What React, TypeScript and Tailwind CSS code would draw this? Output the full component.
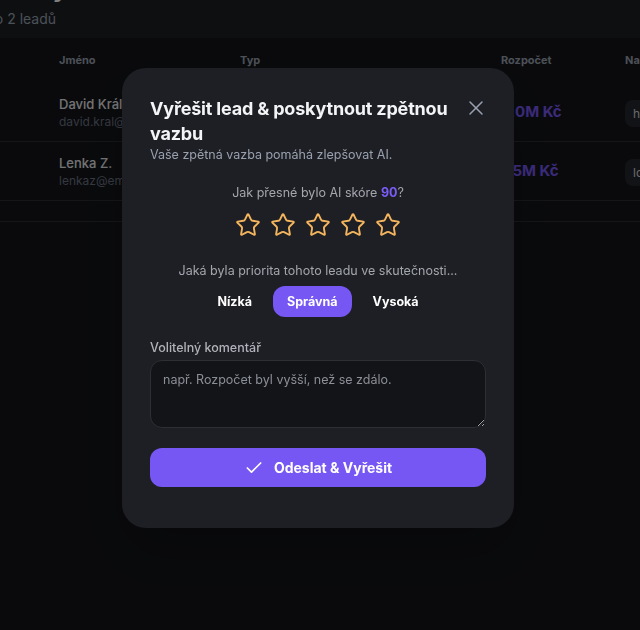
import { Check, Star, X } from "lucide-react";

interface Lead {
  id: number;
  name: string;
  email: string;
  type: string;
  budget: string;
  badge: string;
}

const leads: Lead[] = [
  { id: 1, name: "David Král", email: "david.kral@email.cz", type: "Koupě bytu", budget: "2,0M Kč", badge: "high" },
  { id: 2, name: "Lenka Z.", email: "lenkaz@email.cz", type: "Pronájem", budget: "1,5M Kč", badge: "low" },
];

function LeadsPage() {
  return (
    <div className="min-h-[630px] bg-[#1c1e23] overflow-hidden">
      <div className="-mt-[27px] -ml-[68px] mb-[9px]">
        <h1 className="text-2xl font-bold text-white leading-8">Moje Leady</h1>
        <p className="mt-1 text-[14px] leading-5 text-gray-400">Zobrazeno 2 leadů</p>
      </div>
      <div className="bg-[#141519] min-h-[600px]">
        <div className="grid grid-cols-[59px_181px_261px_124px_1fr] h-[45px] items-center text-[11px] font-bold text-gray-400">
          <div />
          <div>Jméno</div>
          <div>Typ</div>
          <div>Rozpočet</div>
          <div>Nabídka</div>
        </div>
        {leads.map(lead => (
          <div
            key={lead.id}
            className="grid grid-cols-[59px_181px_261px_124px_1fr] h-[59px] items-center border-b border-[#2a2c31]"
          >
            <div />
            <div>
              <div className="text-[13px] font-medium text-gray-200 leading-5">{lead.name}</div>
              <div className="text-[12px] text-gray-500 leading-4">{lead.email}</div>
            </div>
            <div className="text-[13px] text-gray-300">{lead.type}</div>
            <div className="text-[15px] font-bold text-[#7657f3]">{lead.budget}</div>
            <div>
              <span className="px-2 py-1.5 rounded-lg bg-[#25272c] text-[12px] text-gray-300">{lead.badge}</span>
            </div>
          </div>
        ))}
        <div className="h-[21px] border-b border-[#2a2c31]" />
      </div>
    </div>
  );
}

function FeedbackModal() {
  const priorities = ["Nízká", "Správná", "Vysoká"];
  const selected = "Správná";

  return (
    <div className="fixed inset-0 bg-black/50 flex justify-center pt-[68px] pr-1">
      <div className="w-[392px] h-[460px] bg-[#1e1f24] rounded-3xl px-7 pt-7 pb-[41px] shadow-2xl">
        <div className="flex items-start justify-between gap-2">
          <div>
            <h2 className="text-[18px] font-bold leading-[25px] tracking-[-0.01em] text-[#f3f4f6]">
              Vyřešit lead &amp; poskytnout zpětnou vazbu
            </h2>
            <p className="text-[12.5px] leading-[18px] text-gray-400">Vaše zpětná vazba pomáhá zlepšovat AI.</p>
          </div>
          <button className="text-gray-400 -mr-[2px] shrink-0">
            <X size={24} strokeWidth={1.5} />
          </button>
        </div>

        <p className="mt-5 text-center text-[12.5px] leading-[18px] text-[#a3a6ad]">
          Jak přesné bylo AI skóre <span className="font-bold text-[#7a5cf7]">90</span>?
        </p>
        <div className="mt-2.5 flex justify-center gap-[9px]">
          {[1, 2, 3, 4, 5].map(i => (
            <button key={i} className="text-[#f4b55f]">
              <Star size={26} strokeWidth={1.75} />
            </button>
          ))}
        </div>

        <p className="mt-6 text-center text-[12.5px] leading-[18px] text-[#a3a6ad]">
          Jaká byla priorita tohoto leadu ve skutečnosti...
        </p>
        <div className="mt-1.5 flex justify-center gap-[7px]">
          {priorities.map(p => (
            <button
              key={p}
              className={`px-3.5 py-2 rounded-xl text-[12.5px] leading-[15px] font-bold text-white ${
                p === selected ? "bg-[#7657f3]" : ""
              }`}
            >
              {p}
            </button>
          ))}
        </div>

        <label className="block mt-[22px] text-[12.5px] leading-[18px] font-medium text-[#b0b3ba]">
          Volitelný komentář
        </label>
        <textarea
          className="mt-[3px] block w-full h-[68px] rounded-xl bg-[#131418] border border-[#2e2f35] px-3 py-2.5 text-[12.5px] leading-[18px] text-gray-200 placeholder:text-[#8b8f97] outline-none"
          placeholder="např. Rozpočet byl vyšší, než se zdálo."
        />

        <button className="mt-5 w-full h-[39px] rounded-xl bg-[#7657f3] flex items-center justify-center gap-2.5 text-[14px] font-bold text-white">
          <Check size={20} strokeWidth={2} />
          Odeslat &amp; Vyřešit
        </button>
      </div>
    </div>
  );
}

export default function App() {
  return (
    <div className="font-['Inter',sans-serif]">
      <LeadsPage />
      <FeedbackModal />
    </div>
  );
}
